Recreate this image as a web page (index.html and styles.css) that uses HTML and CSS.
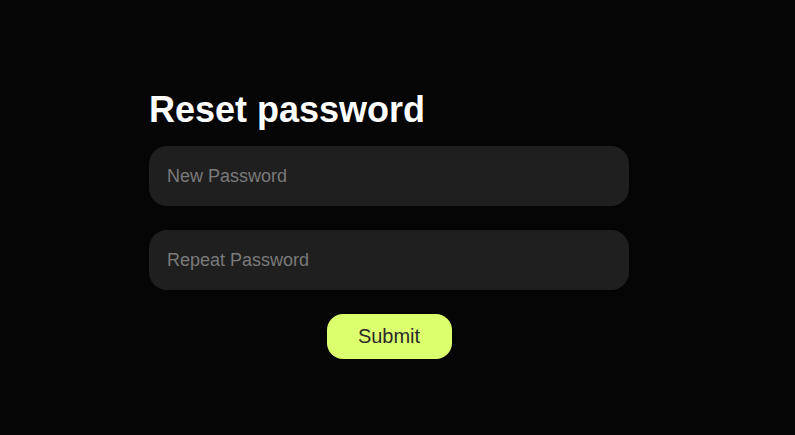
FILE: index.html
```html
<!DOCTYPE html>
<html lang="en">
<head>
<meta charset="utf-8">
<title>Reset password</title>
<link rel="stylesheet" href="styles.css">
</head>
<body>
<main class="page">
  <form class="card">
    <h1 class="title">Reset password</h1>
    <input class="field" type="password" placeholder="New Password">
    <input class="field" type="password" placeholder="Repeat Password">
    <button class="submit" type="button">Submit</button>
  </form>
</main>
</body>
</html>
```
FILE: styles.css
```css
html, body {
  margin: 0;
  padding: 0;
  background: #050505;
  font-family: "Liberation Sans", Arial, sans-serif;
}
.page {
  width: 795px;
  height: 435px;
  display: flex;
  justify-content: center;
  padding-top: 89px;
  padding-right: 17px;
  box-sizing: border-box;
}
.card {
  width: 480px;
  display: flex;
  flex-direction: column;
}
.title {
  margin: 0 0 16px 0;
  font-size: 36px;
  font-weight: 700;
  color: #ffffff;
  line-height: 41px;
}
.field {
  height: 60px;
  border: none;
  outline: none;
  border-radius: 18px;
  background: #1f1f1f;
  padding: 0 18px;
  font-family: "Liberation Sans", Arial, sans-serif;
  font-size: 18px;
  color: #ddd;
  margin-bottom: 24px;
  box-sizing: border-box;
}
.field::placeholder {
  color: #7a7a7a;
}
.submit {
  align-self: center;
  width: 125px;
  height: 45px;
  border: none;
  border-radius: 16px;
  background: #dcff6e;
  color: #2a2a2a;
  font-family: "Liberation Sans", Arial, sans-serif;
  font-size: 20px;
  padding: 0;
}
```
